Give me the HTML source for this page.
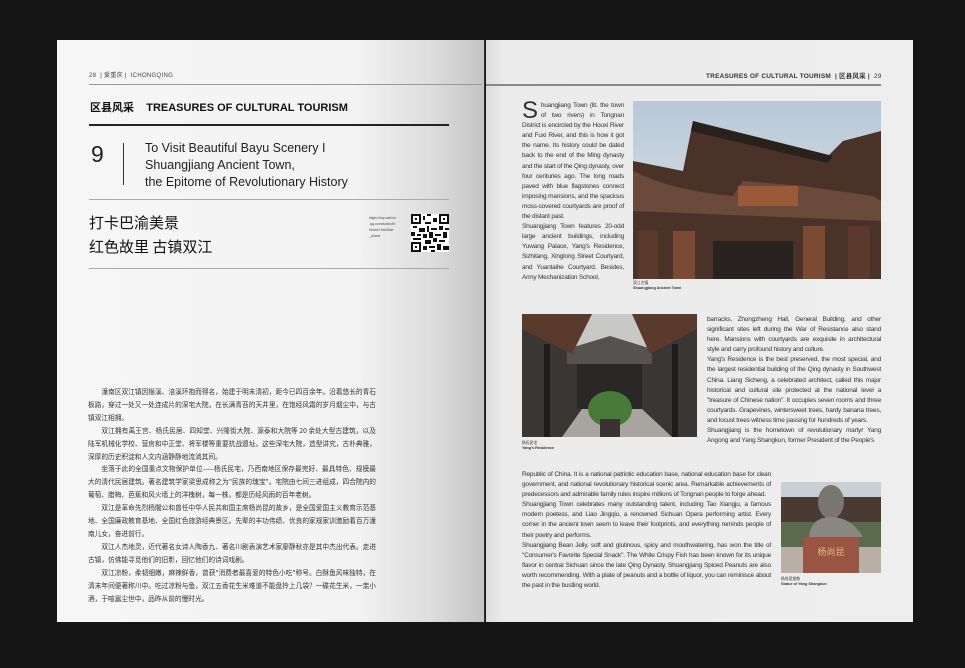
<!DOCTYPE html>
<html><head><meta charset="utf-8"><style>
*{margin:0;padding:0;box-sizing:border-box}
body{width:965px;height:668px;background:#151515;position:relative;overflow:hidden;font-family:"Liberation Sans","Noto Sans CJK SC",sans-serif;color:#222}
.abs{position:absolute}
#lp{left:57px;top:40px;width:428px;height:582px;background:linear-gradient(90deg,#f6f6f6 0%,#f3f3f3 70%,#dcdcdc 88%,#c4c4c4 100%);border-right:1px solid #333}
#rp{left:486px;top:40px;width:427px;height:582px;background:linear-gradient(90deg,#dcdcdc 0%,#ebebeb 4%,#eeeeee 100%)}
.zh{font-family:"Noto Sans CJK SC",sans-serif}
.small{font-size:6.5px;line-height:10.1px;color:#333;text-align:justify;letter-spacing:-0.2px}
.body{font-size:6.7px;line-height:12.9px;color:#333;text-align:justify}
.body p{text-indent:2em}
</style></head><body>
<div id="lp" class="abs"></div>
<div id="rp" class="abs"></div>

<div class="abs" style="left:89px;top:70px;font-size:6px;color:#444;letter-spacing:.3px">28 &nbsp;| <span class="zh">爱重庆</span> | &nbsp;ICHONGQING</div>
<div class="abs" style="left:89px;top:84px;width:393px;height:1px;background:#999"></div>
<div class="abs" style="left:90px;top:99px;font-size:11px;font-weight:bold;color:#111"><span class="zh">区县风采</span>&nbsp;&nbsp;&nbsp; TREASURES OF CULTURAL TOURISM</div>
<div class="abs" style="left:89px;top:124px;width:360px;height:2px;background:#222"></div>
<div class="abs" style="left:91px;top:141px;font-size:23px;color:#222">9</div>
<div class="abs" style="left:123px;top:143px;width:1px;height:42px;background:#333"></div>
<div class="abs" style="left:145px;top:140px;font-size:12.5px;line-height:17px;color:#222">To Visit Beautiful Bayu Scenery I<br>Shuangjiang Ancient Town,<br>the Epitome of Revolutionary History</div>
<div class="abs" style="left:89px;top:199px;width:360px;height:1px;background:#aaa"></div>
<div class="abs zh" style="left:89px;top:211px;font-size:15px;line-height:24px;color:#111">打卡巴渝美景<br>红色故里 古镇双江</div>
<div class="abs" style="left:369px;top:215px;font-size:3.6px;line-height:6px;color:#444">https://mp.weixin<br>.qq.com/s/cIboN<br>NrxbzYhAvNde<br>_a3ww</div>
<svg class="abs" style="left:411px;top:214px" width="38" height="38" viewBox="0 0 19 19">
<rect width="19" height="19" fill="#fff"/>
<g fill="#111">
<rect x="0" y="0" width="5" height="5"/><rect x="14" y="0" width="5" height="5"/><rect x="0" y="14" width="5" height="5"/>
<rect x="6" y="1" width="1" height="2"/><rect x="8" y="0" width="2" height="1"/><rect x="11" y="2" width="2" height="2"/><rect x="7" y="4" width="3" height="1"/>
<rect x="1" y="6" width="2" height="1"/><rect x="4" y="7" width="3" height="2"/><rect x="8" y="6" width="1" height="3"/><rect x="10" y="7" width="3" height="1"/><rect x="14" y="6" width="2" height="2"/><rect x="17" y="7" width="2" height="1"/>
<rect x="0" y="9" width="2" height="2"/><rect x="3" y="10" width="2" height="1"/><rect x="6" y="10" width="2" height="2"/><rect x="9" y="9" width="2" height="3"/><rect x="12" y="10" width="3" height="1"/><rect x="16" y="9" width="2" height="3"/>
<rect x="1" y="12" width="4" height="1"/><rect x="7" y="13" width="3" height="2"/><rect x="11" y="12" width="2" height="2"/><rect x="14" y="13" width="3" height="1"/>
<rect x="6" y="16" width="2" height="2"/><rect x="9" y="16" width="3" height="1"/><rect x="13" y="15" width="2" height="3"/><rect x="16" y="16" width="3" height="2"/><rect x="10" y="18" width="2" height="1"/>
</g>
<g fill="#fff"><rect x="1" y="1" width="3" height="3"/><rect x="15" y="1" width="3" height="3"/><rect x="1" y="15" width="3" height="3"/></g>
<g fill="#111"><rect x="2" y="2" width="1" height="1"/><rect x="16" y="2" width="1" height="1"/><rect x="2" y="16" width="1" height="1"/></g>
</svg>
<div class="abs" style="left:89px;top:268px;width:360px;height:1px;background:#aaa"></div>

<div class="abs body zh" style="left:88px;top:385px;width:288px">
<p>潼南区双江镇因猴溪、涪溪环抱而得名，始建于明末清初，距今已四百余年。沿着悠长的青石板路，穿过一处又一处连成片的深宅大院，在长满青苔的天井里，在饱经风霜的岁月烟尘中，与古镇双江相拥。</p>
<p>双江拥有禹王宫、杨氏民居、四知堂、兴隆街大院、源泰和大院等 20 余处大型古建筑，以及陆军机械化学校、营房和中正堂、将军楼等重要抗战遗址。这些深宅大院，造型讲究，古朴典雅，深厚的历史积淀和人文内涵静静地流淌其间。</p>
<p>坐落于此的全国重点文物保护单位——杨氏民宅，乃西南地区保存最完好、最具特色、规模最大的清代民居建筑。著名建筑学家梁思成称之为"民族的瑰宝"。宅院由七间三进组成，四合院内的葡萄、腊梅、芭蕉和风火墙上的洋槐树，每一株，都是历经风雨的百年老树。</p>
<p>双江是革命先烈杨闇公和曾任中华人民共和国主席杨尚昆的故乡，是全国爱国主义教育示范基地、全国廉政教育基地、全国红色旅游经典景区。先辈的丰功伟绩、优良的家规家训激励着百万潼南儿女，奋进前行。</p>
<p>双江人杰地灵，近代著名女诗人陶香九、著名川剧表演艺术家廖静秋亦是其中杰出代表。走进古镇，仿佛能寻觅他们的旧影，回忆他们的诗词戏剧。</p>
<p>双江凉粉，柔韧细嫩，麻辣鲜香，曾获"消费者最喜爱的特色小吃"称号。白酥鱼风味独特，在清末年间便著称川中。吃过凉粉与鱼，双江五香花生米难道不能盘拎上几袋？一碟花生米，一盅小酒，于喧嚣尘世中，品昨从前的慢时光。</p>
</div>

<div class="abs" style="left:706px;top:70px;font-size:6.5px;font-weight:bold;color:#333;letter-spacing:.2px">TREASURES OF CULTURAL TOURISM &nbsp;| <span class="zh">区县风采</span> | &nbsp;<span style="font-weight:normal">29</span></div>
<div class="abs" style="left:486px;top:84px;width:395px;height:2px;background:#888"></div>

<div class="abs small" style="left:522px;top:101px;width:102px">
<span style="float:left;font-size:24px;line-height:19px;margin:0 3px 0 0;font-weight:300">S</span>huangjiang Town (lit. the town of two rivers) in Tongnan District is encircled by the Houxi River and Fuxi River, and this is how it got the name. Its history could be dated back to the end of the Ming dynasty and the start of the Qing dynasty, over four centuries ago. The long roads paved with blue flagstones connect imposing mansions, and the spacious moss-covered courtyards are proof of the distant past.<br>Shuangjiang Town features 20-odd large ancient buildings, including Yuwang Palace, Yang's Residence, Sizhitang, Xinglong Street Courtyard, and Yuantaihe Courtyard. Besides, Army Mechanization School,
</div>

<svg class="abs" style="left:633px;top:101px" width="248" height="178" viewBox="0 0 248 178">
<defs><linearGradient id="sky" x1="0" y1="0" x2="0" y2="1"><stop offset="0" stop-color="#b8c8d8"/><stop offset="1" stop-color="#e2e4e6"/></linearGradient></defs>
<rect width="248" height="178" fill="url(#sky)"/>
<path d="M0 60 L50 70 L60 20 Q120 40 190 60 L210 40 L248 30 L248 178 L0 178Z" fill="#4a3228"/>
<path d="M0 70 Q40 90 100 95 L110 80 L170 85 L240 95 L248 100 L248 120 L0 110Z" fill="#6a4a3a"/>
<rect x="105" y="85" width="60" height="20" fill="#9a5a3a"/>
<rect x="5" y="130" width="20" height="48" fill="#5a3a2c"/>
<rect x="40" y="130" width="22" height="48" fill="#7a4a34"/>
<rect x="80" y="140" width="80" height="38" fill="#2a2220"/>
<rect x="170" y="125" width="22" height="53" fill="#7a4a34"/>
<rect x="215" y="125" width="22" height="53" fill="#5a3a2c"/>
<path d="M60 20 Q120 35 200 55 L195 62 Q120 45 58 30Z" fill="#2a201c"/>
</svg>
<div class="abs" style="left:633px;top:281px;font-size:3.8px;line-height:5px;color:#333"><span class="zh">双江古镇</span><br><b>Shuangjiang Ancient Town</b></div>

<svg class="abs" style="left:522px;top:314px" width="175" height="123" viewBox="0 0 175 123">
<rect width="175" height="123" fill="#3a3634"/>
<rect x="50" y="0" width="80" height="35" fill="#c8c8c6"/>
<path d="M45 35 L88 22 L130 35 L130 50 L45 50Z" fill="#555250"/>
<path d="M55 50 L120 50 L120 95 L55 95Z" fill="#2a2826"/>
<path d="M0 0 L70 0 L50 40 L0 15Z" fill="#5a3a2c"/>
<path d="M175 0 L110 0 L128 40 L175 15Z" fill="#5a3a2c"/>
<path d="M40 123 L60 95 L120 95 L150 123Z" fill="#a8a4a0"/>
<ellipse cx="88" cy="95" rx="22" ry="18" fill="#4a7a3a"/>
<rect x="78" y="105" width="20" height="18" fill="#3a3230"/>
<rect x="22" y="30" width="6" height="93" fill="#1e1c1a"/>
<rect x="150" y="30" width="6" height="93" fill="#1e1c1a"/>
</svg>
<div class="abs" style="left:522px;top:441px;font-size:3.8px;line-height:5px;color:#333"><span class="zh">杨氏民宅</span><br><b>Yang's Residence</b></div>

<div class="abs small" style="left:707px;top:315px;width:174px">
barracks, Zhongzheng Hall, General Building, and other significant sites left during the War of Resistance also stand here. Mansions with courtyards are exquisite in architectural style and carry profound history and culture.<br>Yang's Residence is the best preserved, the most special, and the largest residential building of the Qing dynasty in Southwest China. Liang Sicheng, a celebrated architect, called this major historical and cultural site protected at the national level a "treasure of Chinese nation". It occupies seven rooms and three courtyards. Grapevines, wintersweet trees, hardy banana trees, and locust trees witness time passing for hundreds of years.<br>Shuangjiang is the hometown of revolutionary martyr Yang Angong and Yang Shangkun, former President of the People's
</div>

<div class="abs small" style="left:522px;top:470px;width:249px">
Republic of China. It is a national patriotic education base, national education base for clean government, and national revolutionary historical scenic area. Remarkable achievements of predecessors and admirable family rules inspire millions of Tongnan people to forge ahead.<br>Shuangjiang Town celebrates many outstanding talent, including Tao Xiangju, a famous modern poetess, and Liao Jingqiu, a renowned Sichuan Opera performing artist. Every corner in the ancient town seem to leave their footprints, and everything reminds people of their poetry and performs.<br>Shuangjiang Bean Jelly, soft and glutinous, spicy and mouthwatering, has won the title of "Consumer's Favorite Special Snack". The White Crispy Fish has been known for its unique flavor in central Sichuan since the late Qing Dynasty. Shuangjiang Spiced Peanuts are also worth recommending. With a plate of peanuts and a bottle of liquor, you can reminisce about the past in the bustling world.
</div>

<svg class="abs" style="left:781px;top:482px" width="100" height="91" viewBox="0 0 100 91">
<rect width="100" height="91" fill="#c8d0d4"/>
<rect x="0" y="15" width="100" height="30" fill="#4a3a34"/>
<rect x="0" y="40" width="100" height="30" fill="#5a6a4a"/>
<rect x="0" y="65" width="100" height="26" fill="#b8b0a6"/>
<ellipse cx="50" cy="20" rx="13" ry="17" fill="#7a7670"/>
<path d="M28 55 Q30 35 50 35 Q70 35 82 55Z" fill="#8a8680"/>
<rect x="22" y="55" width="56" height="36" fill="#9a5444"/>
<text x="50" y="73" font-size="9" fill="#e0c080" text-anchor="middle" font-family="Noto Sans CJK SC">杨尚昆</text>
</svg>
<div class="abs" style="left:781px;top:577px;font-size:3.8px;line-height:5px;color:#333"><span class="zh">杨尚昆塑像</span><br><b>Statue of Yang Shangkun</b></div>
</body></html>
